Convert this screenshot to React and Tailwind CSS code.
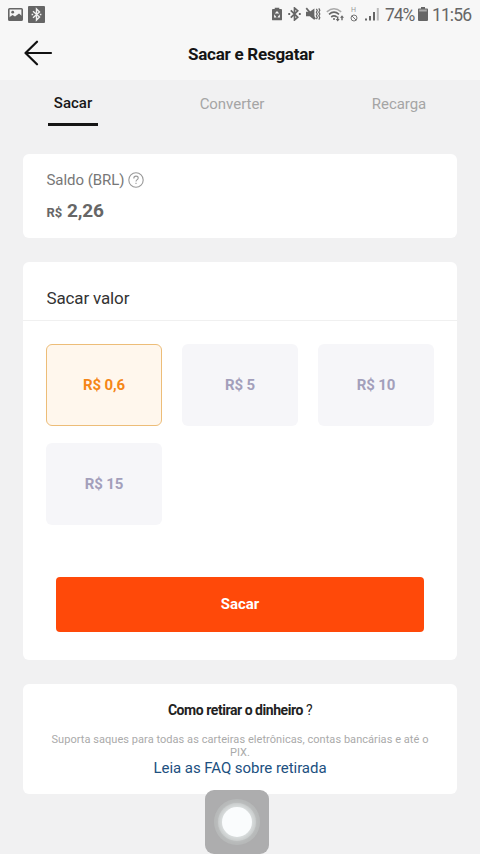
import React from "react";

const tabs = [
  { label: "Sacar",     active: true,  style: "ml-12 w-[50px]"  },
  { label: "Converter", active: false, style: "ml-[94px] w-20"  },
  { label: "Recarga",   active: false, style: "ml-[87px] w-20"  },
];

const amounts = [
  { label: "R$ 0,6", selected: true  },
  { label: "R$ 5",   selected: false },
  { label: "R$ 10",  selected: false },
  { label: "R$ 15",  selected: false },
];

function StatusBar() {
  return (
    <div className="h-7 flex items-center text-[#666] pl-2 pr-[10px]">
      {/* Notifications */}
      <svg width="15" height="13" viewBox="0 0 15 13">
        <rect x="0.8" y="0.8" width="13.4" height="11.4" rx="0.8" fill="#f7f7f7" stroke="currentColor" strokeWidth="1.6" />
        <path d="M1 9.5 L4.5 7 L7 8.5 L11 5.5 L14 8 V12 H1 Z" fill="currentColor" />
        <circle cx="4.7" cy="4.2" r="1.4" fill="currentColor" />
      </svg>
      <svg className="ml-[5px]" width="17" height="17" viewBox="0 0 17 17">
        <rect width="17" height="17" rx="1" fill="currentColor" />
        <path d="M5 5.3 L11.5 11 L8.5 14 V3 L11.5 6 L5 11.7" fill="none" stroke="#f2f2f2" strokeWidth="1.4" />
        <path d="M3.6 8.5 H5.2 M11.8 8.5 H13.4" stroke="#f2f2f2" strokeWidth="1.4" />
      </svg>

      {/* System */}
      <svg className="ml-auto shrink-0" width="10" height="14" viewBox="0 0 11 14">
        <path d="M3 0 H8 V1.5 H10 Q11 1.5 11 2.5 V13 Q11 14 10 14 H1 Q0 14 0 13 V2.5 Q0 1.5 1 1.5 H3 Z" fill="currentColor" />
        <path d="M5.5 3.7 L8 6.5 H3 Z M2.6 7.3 L5 10.8 H2.2 Z M8.4 7.3 L8.8 10.8 H6 Z" fill="#f7f7f7" />
      </svg>
      <svg className="ml-[6px] shrink-0" width="13" height="14" viewBox="0 0 14 15">
        <path d="M3 3.5 L10.5 11 L7 14 V1 L10.5 4 L3 11.5" fill="none" stroke="currentColor" strokeWidth="1.8" />
        <path d="M0.3 7.5 H2.3 M11.7 7.5 H13.7" stroke="currentColor" strokeWidth="2" />
      </svg>
      <svg className="ml-[4px] shrink-0" width="16" height="14" viewBox="0 0 16 15">
        <path d="M0.5 5 H4.5 L9.5 1.5 V13.8 L4.5 10 H0.5 Z" fill="currentColor" />
        <path d="M0.8 1.2 L10.5 12.8" stroke="currentColor" strokeWidth="1.8" />
        <path d="M11.6 2 L12.6 3.8 L11.6 5.6 L12.6 7.5 L11.6 9.4 L12.6 11.2 L11.6 13 M14.2 1.5 L15.3 3.5 L14.2 5.5 L15.3 7.5 L14.2 9.5 L15.3 11.5 L14.2 13.5" fill="none" stroke="currentColor" strokeWidth="1.3" />
      </svg>
      <svg className="ml-[5px] shrink-0" width="19" height="15" viewBox="0 0 19 15">
        <path d="M0.8 4.8 Q8 -1.2 15.2 4.8" fill="none" stroke="#aaa" strokeWidth="1.5" />
        <path d="M3 7.4 Q8 3 13 7.4 M5.2 10 Q8 7.8 10.8 10" fill="none" stroke="currentColor" strokeWidth="1.6" />
        <path d="M11 9.5 V12 H9.7 L11.7 14.5 L13.7 12 H12.4 V9.5 Z M15.3 13.2 V10.7 H14 L16 8.2 L18 10.7 H16.7 V13.2 Z" fill="currentColor" />
        <circle cx="8" cy="12" r="1" fill="currentColor" />
      </svg>
      <div className="ml-[4px] w-[9px] shrink-0 flex flex-col items-center text-[#999]">
        <span className="text-[7px] leading-[7px]">H</span>
        <svg width="8" height="8" viewBox="0 0 8 8">
          <circle cx="4" cy="4" r="3" fill="none" stroke="#777" strokeWidth="1" />
          <path d="M1.9 1.9 L6.1 6.1" stroke="#777" strokeWidth="1" />
        </svg>
      </div>
      <svg className="ml-[7px] shrink-0" width="14" height="14" viewBox="0 0 14 14">
        <path d="M0 11.5 H2 V13.5 H0 Z M4 9 H6 V13.5 H4 Z M8 5 H10 V13.5 H8 Z" fill="currentColor" />
        <path d="M11.8 1 H13.8 V13.5 H11.8 Z" fill="#bbb" />
      </svg>
      <span className="ml-[6px] pt-px w-[28px] whitespace-nowrap text-[17.5px] leading-7 tracking-[-1.1px]">74%</span>
      <svg className="ml-[5px] shrink-0" width="10" height="14" viewBox="0 0 10 14">
        <path d="M3 0 H7 V1.5 H9.2 Q10 1.5 10 2.5 V13 Q10 14 9 14 H1 Q0 14 0 13 V2.5 Q0 1.5 0.8 1.5 H3 Z" fill="currentColor" />
        <path d="M1.2 2.5 H8.8 V4.5 H1.2 Z" fill="#aaa" />
      </svg>
      <span className="ml-[4px] pt-px w-[38px] whitespace-nowrap text-[17.5px] leading-7 tracking-[-0.9px]">11:56</span>
    </div>
  );
}

function Header() {
  return (
    <header className="h-[52px] grid grid-cols-[80px_1fr_80px] items-center">
      <button className="pl-6 pb-[3px] flex">
        <svg width="29" height="26" viewBox="0 0 29 26" fill="none" stroke="#111" strokeWidth="2.2" strokeLinecap="round" strokeLinejoin="round">
          <path d="M27 13 H1.5 M13 1.7 L1.5 13 L13 24.3" />
        </svg>
      </button>
      <h1 className="pt-px pl-[22px] text-center text-[17px] font-bold tracking-[-0.25px] text-[#151515] whitespace-nowrap">Sacar e Resgatar</h1>
    </header>
  );
}

function Tabs() {
  return (
    <nav className="h-[74px] pt-[13px] flex items-start">
      {tabs.map((tab) => (
        <button key={tab.label} className={`${tab.style} flex flex-col items-center`}>
          {tab.active ? (
            <>
              <span className="text-[15px] leading-5 font-medium text-[#181818]">{tab.label}</span>
              <span className="mt-[10px] w-full h-[3px] bg-[#151515]" />
            </>
          ) : (
            <span className="pt-px text-[15px] leading-5 tracking-[-0.05px] text-[#a5a5a5]">{tab.label}</span>
          )}
        </button>
      ))}
    </nav>
  );
}

function Balance() {
  return (
    <section className="h-[84px] bg-white rounded-md pl-[23.5px] pt-[15px]">
      <div className="flex items-center gap-1 leading-5 text-[#777]">
        <span className="pt-px text-[15px] tracking-[-0.05px]">Saldo (BRL)</span>
        <svg width="16" height="16" viewBox="0 0 16 16" fill="none" stroke="#999" strokeWidth="1.1">
          <circle cx="8" cy="8" r="7.2" />
          <path d="M5.8 6.4 Q5.8 4.1 8 4.1 Q10.2 4.1 10.2 6 Q10.2 7.1 8.9 7.9 Q8 8.5 8 9.6" />
          <path d="M8 10.8 V12" />
        </svg>
      </div>
      <p className="mt-[9px] flex items-baseline gap-[5px] font-bold text-[#666] leading-6">
        <span className="text-[13px] tracking-[-0.1px]">R$</span>
        <span className="text-[19px] tracking-[-0.15px]">2,26</span>
      </p>
    </section>
  );
}

function Withdraw() {
  return (
    <section className="mt-6 h-[398px] bg-white rounded-md">
      <h2 className="h-[59px] pt-6 pl-[23.5px] border-b border-[#f0f0f0] text-[17px] leading-6 tracking-[-0.15px] text-[#333]">Sacar valor</h2>
      <div className="pt-[23px] px-[23px] grid grid-cols-3 gap-x-5 gap-y-[17px]">
        {amounts.map((item) => (
          <button
            key={item.label}
            className={`h-[82px] rounded-md text-[15px] font-bold tracking-[-0.1px]
              ${item.selected
                ? "bg-[#fff7ed] border border-[#edbd78] text-[#f58617]"
                : "bg-[#f6f6f9] text-[#a39fbb]"
              }`}
          >
            {item.label}
          </button>
        ))}
      </div>
      <button className="mt-[52px] ml-[33px] w-[368px] h-[55px] rounded bg-[#ff4909] text-white text-[15px] font-bold">
        Sacar
      </button>
    </section>
  );
}

function Help() {
  return (
    <section className="mt-6 h-[110px] bg-white rounded-md pt-4 px-6 text-center">
      <h3 className="text-sm leading-5 font-bold tracking-[-0.45px] text-[#222]">
        Como retirar o dinheiro <span className="font-normal">?</span>
      </h3>
      <p className="mt-[13px] text-[11px] leading-[13px] tracking-[0.05px] text-[#aaa]">
        Suporta saques para todas as carteiras eletrônicas, contas bancárias e até o PIX.
      </p>
      <a className="-mt-px block text-[15px] leading-5 tracking-[-0.05px] text-[#20507f]">Leia as FAQ sobre retirada</a>
    </section>
  );
}

export default function App() {
  return (
    <div className="relative w-[480px] h-[854px] overflow-hidden bg-[#f1f1f2] font-[Roboto,sans-serif]">
      <div className="bg-[#f7f7f7]">
        <StatusBar />
        <Header />
      </div>
      <Tabs />
      <main className="px-[23px]">
        <Balance />
        <Withdraw />
        <Help />
      </main>

      {/* Assistive touch button */}
      <div className="absolute left-[205px] top-[790px] size-16 rounded-[9px] bg-[#adadae] flex items-center justify-center">
        <div className="size-[46px] rounded-full bg-[#b7b9b9] flex items-center justify-center">
          <div className="size-[38px] rounded-full bg-[#c6c9c9] flex items-center justify-center">
            <div className="size-[30px] rounded-full bg-[#fafcfd] shadow-[0_0_4px_2px_#dde1e1]" />
          </div>
        </div>
      </div>
    </div>
  );
}
